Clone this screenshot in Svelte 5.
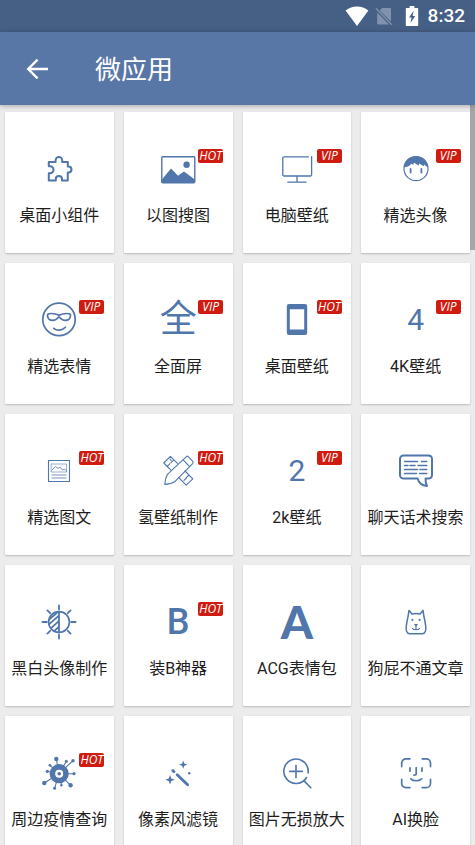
<script>
    // svg icons are drawn on a 40x40 grid, stroked by default; `glyph` is used for the letter icons
    const solid = 'fill="currentColor" stroke="none"';

    const icons = {
        puzzle: `<path stroke-width="2" d="M9.800 13h6.800v-1.800a3.300 3.300 0 0 1 6.600 0V13h5.600v4.400h.6a3.100 3.100 0 0 1 0 6.200h-.6v8H23v-1.400a3.100 3.100 0 0 0-6.200 0v1.400h-7v-7.400H11a3.500 3.500 0 0 0 0-7H9.800z"/>`,
        picture: `<rect x="3.8" y="7.7" width="33" height="26" rx="1"/><circle cx="28.6" cy="15.7" r="3.2" ${solid}/><path ${solid} d="M3.5 31 13 19.5l7 7.3 6-4.2 10.8 7.9V34H3.5z"/>`,
        monitor: `<path stroke-width="1.3" d="M31.4 7.8H7a1.2 1.2 0 0 0-1.2 1.2v16.8A1.2 1.2 0 0 0 7 27h26.4a1.2 1.2 0 0 0 1.2-1.2V7.6M20 27v6M10.8 33.2H29"/>`,
        boy: `<circle cx="20" cy="19.7" r="12" stroke-width="1.2"/><path ${solid} d="M7.7 18.4C8 11.6 13.6 7.2 20 7.2s12 4.600 12.3 11.200c-1.800-.8-3.200-1.600-4-2.800l-.6 1.600-4.500-2.600-.5 1.800-4.700-2.600-.8 2-2-1c-1.200 2.200-4 3.200-7.500 3.600z"/><path stroke-width="1.800" d="M14.600 20v3.600M25.400 20v3.600"/>`,
        shades: `<circle cx="20" cy="19.4" r="16.2" stroke-width="1.7"/><path stroke-width="1.7" d="M20 15.200c-2.500-1.400-5-1.700-8-1.700-2.500 0-3.700.7-3.500 2.300.4 3 2.600 4.600 5.300 4.600 3 0 4.800-2 6.200-3.600 1.400 1.600 3.200 3.600 6.200 3.600 2.700 0 4.900-1.600 5.300-4.600.2-1.600-1-2.300-3.500-2.300-3 0-5.500.3-8 1.700z"/><path stroke-width="1.7" d="M14.800 28.400c3.200 2.600 8.600 2.200 11.600-1.200"/>`,
        phone: `<path ${solid} fill-rule="evenodd" d="M12 4h16a2.200 2.200 0 0 1 2.200 2.200v26.600A2.200 2.200 0 0 1 28 35H12a2.200 2.200 0 0 1-2.200-2.200V6.200A2.200 2.200 0 0 1 12 4zm.8 5.200v20.200h14.400V9.200z"/>`,
        article: `<g stroke-width="1.1"><rect x="9.500" y="9.500" width="21" height="21"/><rect x="12.500" y="13" width="15" height="8" stroke-width=".6"/><path stroke-width=".8" d="m13 19 3.500-3.500 2.500 2 2-1.500 2.500 3 2-1 2 2M13 24h14M13 27h14"/></g>`,
        design: `<g stroke-width="1.1"><path d="M12.700 18.800 5.800 12l6.600-6.600 7 6.900M27 20l7.800 7.800-6.600 6.400-7.600-7.800M15.600 9.200l-2.800 2.600M12 8.200l1.200 1.200M9.200 15.400l2.600-2.600M31 24l-2.800 2.600M26 29.400l2.400-2.400"/><path d="M28.400 5.600 9.400 23.400C7.800 26 7 29.600 6.800 33.400c3.800-.2 7-.8 9.800-2.600l18-18.200c.6-.8.6-1.600 0-2.400l-4.400-4.600c-.6-.6-1.200-.6-1.800 0zM25.200 8.800l6.400 6.800"/></g>`,
        chat: `<path stroke-width="2" d="M7.800 4.400h24.400c2.400 0 3.800 1.400 3.800 3.800v15.600c0 2.400-1.400 3.800-3.800 3.800h-2.600c-.2 3 .4 5.400 1.400 7.400-5.200-.4-8.200-3-9.400-7.400H7.800c-2.400 0-3.800-1.400-3.800-3.800V8.200c0-2.400 1.400-3.800 3.800-3.800z"/><path stroke-width="1.5" d="M8.600 10.500h13M25.400 10.500h5.400M8.600 14.500h3.400M14 14.500h5M22 14.500h8.800M8.600 18.500h13M24 18.500h6.800M8.600 22.500h12M23.600 22.500h7.200"/>`,
        contrast: `<circle cx="20" cy="20" r="10.4" stroke-width="1.7"/><path stroke-width="1.8" d="M20 3.400v4M20 32.600v4M3.400 20h4.400M32.200 20h4.400M8.400 8.400l2.800 2.800M28.800 28.800l2.800 2.800M31.600 8.400l-2.800 2.800M11.200 28.800l-2.800 2.800M20 9.600v20.800M11 16.800l7-6M10.200 22.200l9.400-8.400M12.400 25.800l7.400-6.600M15.400 28.800l4.400-4"/>`,
        dog: `<path stroke-width="1.5" d="M12.600 11.200 13 8.400l3 3.600c2.200-.6 5.800-.6 8 0l3-3.600.4 2.800c.6 5 2.200 9.400 2.400 14 .2 3.600-.8 6.200-3.400 6.600H13.600c-2.600-.4-3.600-3-3.400-6.600.2-4.600 1.800-9 2.400-14z"/><path stroke-width="1.1" d="M20 24v3.200M16.400 26.400c1 1.800 6.200 1.800 7.200 0"/><g ${solid}><circle cx="16.400" cy="17.800" r="1.100"/><circle cx="23.600" cy="17.800" r="1.100"/><path d="M18 22h4l-2 3z"/></g>`,
        virus: `<path stroke-width="1.100" d="M20 20.700 17.300 6M20 20.700 27.300 8.300M20 20.700 34 7.700M20 20.700h15M20 20.700l11.600 11.600M20 20.700l2.600 11.600M20 20.700l-4.400 14.600M20 20.700 5.300 30M20 20.700 8.300 18.300M20 20.700l-9-8.400"/><circle cx="20.2" cy="20.7" r="6.600" stroke-width="6"/><circle cx="20.2" cy="20.7" r="4" fill="#fff" stroke="none"/><g ${solid}><circle cx="20.2" cy="20.7" r="1.800"/><circle cx="17.3" cy="6" r="2.200"/><circle cx="27.3" cy="8.300" r="1.500"/><circle cx="34" cy="7.700" r="1.700"/><circle cx="35" cy="20.700" r="1.600"/><circle cx="31.600" cy="32.300" r="2.200"/><circle cx="22.400" cy="32.300" r="1.200"/><circle cx="15.600" cy="35.300" r="1.500"/><circle cx="5.300" cy="30" r="2.200"/><circle cx="8.300" cy="18.300" r="1.600"/><circle cx="11" cy="12.300" r="1.400"/></g>`,
        wand: `<path stroke-width="2.800" d="m14.800 17.600 1.200 1.200M19.200 21.800l10.400 10"/><g ${solid}><path d="m25.200 7.600 1.100 3 3 1.100-3 1.100-1.100 3-1.100-3-3-1.100 3-1.100zM12 22l1.300 3.400 3.500 1.300-3.500 1.300L12 31.400 10.700 28l-3.500-1.300 3.500-1.300z"/><circle cx="31.200" cy="20.300" r="1.200"/></g>`,
        zoom: `<path stroke-width="1.600" d="M31.200 18.200c0 .6 0 1.200-.1 1.700M31.200 18.200a12.200 12.200 0 1 0-1.700 6.300M29.500 24.500a12 12 0 0 1-2.500 3M12.800 18.400h12.600M19 12.200v12.400M27.600 28.400l6.200 6.400"/>`,
        face: `<path stroke-width="1.700" d="M5.700 13.600V10A4.200 4.200 0 0 1 9.900 5.800h4M26.300 5.800h4a4.200 4.200 0 0 1 4.200 4.200v3.600M34.500 26.400v4a4.200 4.200 0 0 1-4.200 4.200h-4M13.900 34.600h-4a4.200 4.200 0 0 1-4.200-4.200v-4M14 14.800v3.400M26 14.800v3.400M20.200 14.600v6.200c0 1-.8 1.400-2.200 1.400M14.800 25.800c2.600 2.600 8 2.600 10.800 0"/>`
    };

    const apps = [
        { name: '桌面小组件', icon: 'puzzle' },
        { name: '以图搜图', icon: 'picture', badge: 'HOT' },
        { name: '电脑壁纸', icon: 'monitor', badge: 'VIP' },
        { name: '精选头像', icon: 'boy', badge: 'VIP' },
        { name: '精选表情', icon: 'shades', badge: 'VIP' },
        { name: '全面屏', glyph: '全', kind: 'han', badge: 'VIP' },
        { name: '桌面壁纸', icon: 'phone', badge: 'HOT' },
        { name: '4K壁纸', glyph: '4', kind: 'digit', badge: 'VIP' },
        { name: '精选图文', icon: 'article', badge: 'HOT' },
        { name: '氢壁纸制作', icon: 'design', badge: 'HOT' },
        { name: '2k壁纸', glyph: '2', kind: 'digit', badge: 'VIP' },
        { name: '聊天话术搜索', icon: 'chat' },
        { name: '黑白头像制作', icon: 'contrast' },
        { name: '装B神器', glyph: 'B', kind: 'letter', badge: 'HOT' },
        { name: 'ACG表情包', glyph: 'A', kind: 'heavy' },
        { name: '狗屁不通文章', icon: 'dog' },
        { name: '周边疫情查询', icon: 'virus', badge: 'HOT' },
        { name: '像素风滤镜', icon: 'wand' },
        { name: '图片无损放大', icon: 'zoom' },
        { name: 'AI换脸', icon: 'face' }
    ];
</script>

<div class="screen">
    <div class="status-bar">
        <svg class="wifi" viewBox="0 0 24 20" aria-hidden="true">
            <path fill="#fff" d="M12 20 .6 4.600C4 2 7.800.6 12 .6S20 2 23.400 4.600z"/>
        </svg>
        <svg class="sim" viewBox="0 0 18 20" aria-hidden="true">
            <path fill="#8092ae" d="M7 2h8a1 1 0 0 1 1 1v12.600L4.600 4.400zM2.200 6.600 14 18.400H3.200a1 1 0 0 1-1-1z"/>
            <path stroke="#8092ae" stroke-width="1.4" d="m1 2.600 15.800 16.200"/>
        </svg>
        <svg class="battery" viewBox="0 0 14 20" aria-hidden="true">
            <path fill="#fff" d="M4.600 0h4.800v2h2.800c.6 0 1 .4 1 1v16c0 .6-.4 1-1 1H1.800c-.6 0-1-.4-1-1V3c0-.6.4-1 1-1h2.800z"/>
            <path fill="#455f85" d="M8.600 4.800 4 11.600h2.600L5.400 17l4.800-7H7.600z"/>
        </svg>
        <span class="time">8:32</span>
    </div>

    <header class="toolbar">
        <button class="back" aria-label="返回">
            <svg viewBox="0 0 24 24" aria-hidden="true">
                <path fill="none" stroke="currentColor" stroke-width="2.4" d="M23 12H3.400M12.600 2.600 3.200 12l9.400 9.400"/>
            </svg>
        </button>
        <h1>微应用</h1>
    </header>

    <main>
        <div class="list">
            {#each apps as app}
                <button class="card">
                    <span class="icon">
                        {#if app.icon}
                            <svg viewBox="0 0 40 40" aria-hidden="true">{@html icons[app.icon]}</svg>
                        {:else}
                            <span class="glyph {app.kind}">{app.glyph}</span>
                        {/if}
                        {#if app.badge}
                            <span class="badge">{app.badge}</span>
                        {/if}
                    </span>
                    <span class="name">{app.name}</span>
                </button>
            {/each}
        </div>
        <div class="scroll-thumb"></div>
    </main>
</div>

<style>
    :global(body) {
        margin: 0;
    }

    .screen {
        display: flex;
        flex-direction: column;
        height: 100vh;
        background: #ececec;
        font-family: Roboto, "Noto Sans CJK SC", sans-serif;
        overflow: hidden;
    }

    .status-bar {
        display: flex;
        flex-shrink: 0;
        align-items: center;
        justify-content: flex-end;
        height: 32px;
        padding-right: 10px;
        background: #455f85;
    }

    .wifi {
        width: 24px;
        height: 20px;
    }

    .sim {
        width: 18px;
        height: 20px;
        margin-left: 6px;
    }

    .battery {
        width: 14px;
        height: 20px;
        margin-left: 12px;
    }

    .time {
        margin-left: 9px;
        color: #fff;
        font-size: 19px;
        font-weight: 500;
        line-height: 32px;
    }

    .toolbar {
        display: flex;
        flex-shrink: 0;
        align-items: center;
        height: 73px;
        padding-left: 16px;
        background: #5877a7;
        color: #fff;
        box-shadow: 0 1px 5px rgba(0, 0, 0, 0.3);
        z-index: 1;
    }

    .back {
        display: flex;
        padding: 9px;
        border: 0;
        background: none;
        color: inherit;
        cursor: pointer;
    }

    .back svg {
        width: 24px;
        height: 24px;
    }

    h1 {
        margin: 2px 0 0 37px;
        font-size: 26px;
        font-weight: 400;
        line-height: 36px;
    }

    main {
        position: relative;
        flex: 1;
        min-height: 0;
    }

    .list {
        display: grid;
        grid-template-columns: repeat(4, 1fr);
        align-content: start;
        gap: 10px;
        box-sizing: border-box;
        height: 100%;
        padding: 7px 5px;
        overflow-y: auto;
        scrollbar-width: none;
    }

    .card {
        display: flex;
        flex-direction: column;
        align-items: center;
        gap: 15px;
        padding: 37px 0 25px;
        border: 0;
        border-radius: 1px;
        background: #fff;
        box-shadow: 0 1px 2px rgba(0, 0, 0, 0.22);
        font-family: inherit;
        cursor: pointer;
    }

    .icon {
        position: relative;
        display: flex;
        align-items: center;
        justify-content: center;
        width: 40px;
        height: 40px;
        color: #5076ab;
    }

    .icon svg {
        width: 40px;
        height: 40px;
        fill: none;
        stroke: currentColor;
        stroke-width: 1.4;
        stroke-linecap: round;
        stroke-linejoin: round;
    }

    .glyph {
        line-height: 40px;
    }

    .han {
        font-size: 37px;
    }

    .digit {
        font-size: 30px;
    }

    .letter {
        font-size: 36px;
        font-weight: 500;
    }

    .heavy {
        font-family: Lato, sans-serif;
        font-size: 46px;
        font-weight: 900;
    }

    .badge {
        position: absolute;
        top: 0;
        left: 40px;
        width: 25px;
        border-radius: 2px;
        background: #d01c10;
        color: #fff;
        font-family: "Open Sans", "Noto Sans", sans-serif;
        font-size: 12px;
        font-style: italic;
        font-weight: 500;
        line-height: 14px;
        text-align: center;
    }

    .name {
        color: #1e1e1e;
        font-size: 16px;
        line-height: 24px;
        white-space: nowrap;
    }

    .scroll-thumb {
        position: absolute;
        top: 0;
        right: 0;
        width: 5px;
        height: 145px;
        background: #a6a6a6;
    }
</style>
